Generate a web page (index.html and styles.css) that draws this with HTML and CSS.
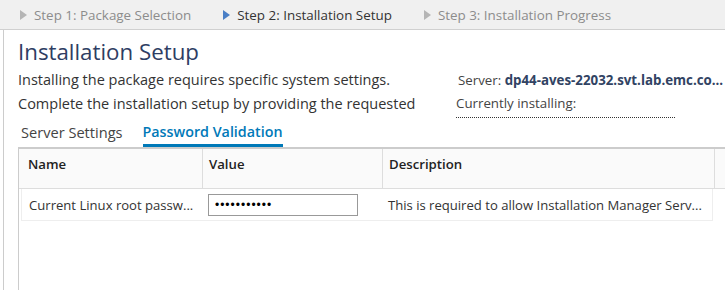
FILE: index.html
```
<!doctype html>
<html lang="en">
    <head>
        <meta charset="UTF-8" />
        <title>Installation Setup</title>
        <link rel="stylesheet" href="styles.css">
    </head>
    <body>
        <div class="steps">
            <div class="step">
                <span class="arrow"></span>Step 1: Package Selection
            </div>
            <div class="step active">
                <span class="arrow"></span>Step 2: Installation Setup
            </div>
            <div class="step">
                <span class="arrow"></span>Step 3: Installation Progress
            </div>
        </div>
        <div class="main">
            <h1>Installation Setup</h1>
            <div class="intro">
                <div class="intro-text">
                    <p>Installing the package requires specific system settings.</p>
                    <p>Complete the installation setup by providing the requested</p>
                </div>
                <div class="status">
                    <p class="server">Server: <b>dp44-aves-22032.svt.lab.emc.co...</b></p>
                    <p class="current">Currently installing:</p>
                </div>
            </div>
            <div class="tabs">
                <div class="tab">Server Settings</div>
                <div class="tab active">Password Validation</div>
            </div>
            <div class="grid">
                <div class="grid-head">
                    <div class="cell col-name">Name</div>
                    <div class="cell col-value">Value</div>
                    <div class="cell col-desc">Description</div>
                </div>
                <div class="grid-row">
                    <div class="cell col-name">Current Linux root passw...</div>
                    <div class="cell col-value">
                        <input type="password" class="pw" value="abcdefghijk" />
                    </div>
                    <div class="cell col-desc">This is required to allow Installation Manager Serv...</div>
                </div>
            </div>
        </div>
    </body>
</html>
```

FILE: styles.css
```
body {
    font-family: "Open Sans", Lato, sans-serif;
    margin: 0;
    padding: 0;
    color: #333;
    background: #fff;
    height: 290px;
    overflow: hidden;
}
p {
    margin: 0;
}
.steps {
    display: flex;
    height: 30px;
    align-items: center;
    background: #f0f0f0;
    border-bottom: 1px solid #d0d0d0;
    padding-left: 20px;
    gap: 32px;
    box-sizing: border-box;
}
.step {
    display: flex;
    align-items: center;
    font-size: 13.4px;
    color: #8c8c8c;
}
.step .arrow {
    width: 0;
    height: 0;
    border-top: 5px solid transparent;
    border-bottom: 5px solid transparent;
    border-left: 7px solid #b5b5b5;
    margin-right: 7px;
}
.step.active {
    color: #333;
}
.step.active .arrow {
    border-left-color: #4a7fc6;
}
.main {
    margin-left: 3px;
    border-left: 1px solid #ccc;
    padding-left: 14px;
    height: 260px;
    display: flex;
    flex-direction: column;
    box-sizing: border-box;
}
h1 {
    margin: 0;
    padding-top: 10px;
    font-size: 22.3px;
    font-weight: 500;
    color: #2e3d63;
    line-height: 24px;
}
.intro {
    display: flex;
    margin-top: 4px;
    font-size: 14.5px;
    line-height: 24px;
}
.intro-text {
    width: 438px;
}
.status {
    color: #444;
    font-size: 13.3px;
}
.server {
    padding-left: 2px;
    white-space: nowrap;
}
.server b {
    color: #314363;
    font-weight: 700;
}
.current {
    width: 219px;
    border-bottom: 1px dotted #333;
    padding-bottom: 3px;
    line-height: 22px;
}
.tabs {
    display: flex;
    border-bottom: 1px solid #ccc;
    gap: 20px;
    padding-left: 3px;
}
.tab {
    font-size: 14.6px;
    line-height: 24px;
    padding-top: 2px;
    color: #444;
    border-bottom: 3px solid transparent;
}
.tab.active {
    color: #0079b8;
    font-weight: 600;
    font-size: 14.3px;
    border-bottom-color: #0079b8;
}
.grid {
    flex: 1;
    border-top: 1px solid #ccc;
    border-left: 1px solid #ccc;
}
.grid-head {
    display: flex;
    height: 39px;
    background: #fafafa;
    border-bottom: 1px solid #ddd;
}
.grid-head .cell {
    font-size: 13.2px;
    font-weight: 600;
    color: #222;
    padding: 6px 0 0 6px;
    border-right: 1px solid #ddd;
    box-sizing: border-box;
}
.grid-head .col-name {
    padding-left: 9px;
}
.col-name {
    width: 184px;
}
.col-value {
    width: 180px;
}
.col-desc {
    width: 332px;
}
.grid-row {
    display: flex;
    margin-left: 2px;
    width: 692px;
    height: 32px;
    border: 1px solid #eee;
    border-top: none;
    box-sizing: border-box;
}
.grid-row .cell {
    font-size: 13.1px;
    color: #333;
    display: flex;
    align-items: center;
    padding-left: 7px;
    box-sizing: border-box;
    white-space: nowrap;
}
.grid-row .col-name {
    width: 182px;
}
.grid-row .col-value {
    padding-left: 5px;
}
.grid-row .col-desc {
    padding-left: 6px;
}
.pw {
    width: 150px;
    height: 22px;
    box-sizing: border-box;
    border: 1px solid #999;
    padding: 0 6px;
    font-size: 12px;
    letter-spacing: 1px;
}
```
